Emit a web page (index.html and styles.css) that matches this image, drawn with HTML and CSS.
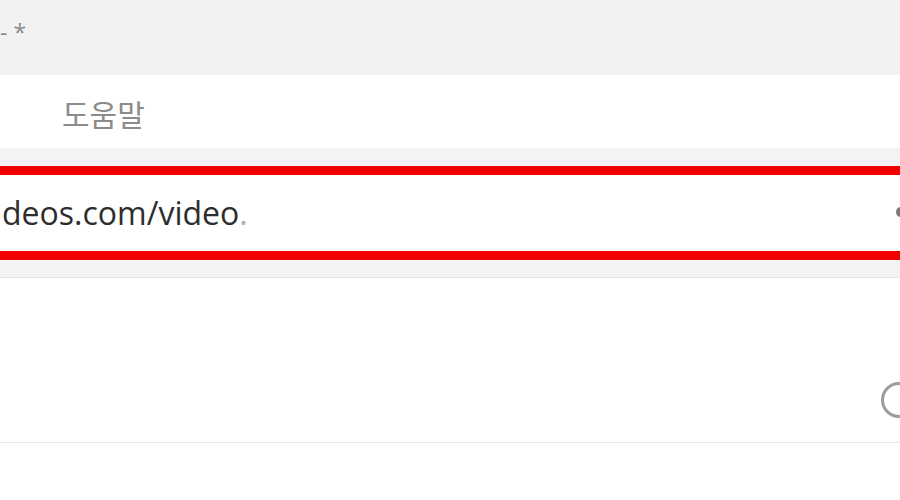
FILE: index.html
```html
<!DOCTYPE html>
<html lang="ko">
<head>
<meta charset="utf-8">
<link rel="stylesheet" href="styles.css">
</head>
<body>
<div class="page">
  <div class="label-band"><span class="label">- *</span></div>
  <div class="help-row"><span class="help">도움말</span></div>
  <div class="gap"></div>
  <div class="field">
    <span class="value">deos.com/video<span class="fade">.</span></span>
    <span class="clear-dot"></span>
  </div>
  <div class="gap gap-bottom"></div>
  <div class="option-row">
    <span class="radio"></span>
  </div>
  <div class="rest"></div>
</div>
</body>
</html>
```
FILE: styles.css
```css
html, body {
  margin: 0;
  padding: 0;
  background: #ffffff;
}
.page {
  width: 900px;
  height: 500px;
  overflow: hidden;
  font-family: "Open Sans", "Noto Sans", "Noto Sans CJK KR", sans-serif;
}
.label-band {
  height: 75px;
  background: #f2f2f2;
  overflow: hidden;
}
.label {
  display: block;
  padding-left: 0;
  line-height: 64px;
  font-size: 23px;
  color: #8a8a8a;
  white-space: nowrap;
}
.help-row {
  height: 73px;
  background: #ffffff;
  display: flex;
  align-items: center;
  padding-left: 62px;
}
.help {
  font-family: "Noto Sans CJK KR", "Noto Sans", sans-serif;
  font-size: 30px;
  color: #8c8c8c;
  line-height: 1;
  margin-top: 2px;
}
.gap {
  height: 18px;
  background: #f3f3f5;
}
.gap-bottom {
  height: 17px;
  border-bottom: 1px solid #e2e2e4;
}
.field {
  height: 76px;
  border-top: 9px solid #f20000;
  border-bottom: 9px solid #f20000;
  background: #ffffff;
  display: flex;
  align-items: center;
  justify-content: space-between;
  overflow: hidden;
}
.value {
  font-size: 32px;
  line-height: 76px;
  color: #2e2e2e;
  padding-left: 2px;
  white-space: nowrap;
}
.fade {
  color: #b0b0b0;
}
.clear-dot {
  width: 9px;
  height: 10px;
  border-radius: 50%;
  background: #7a7a7a;
  margin-right: -5px;
  margin-top: -2px;
}
.option-row {
  height: 165px;
  box-sizing: border-box;
  border-bottom: 1px solid #e6e6e8;
  display: flex;
  justify-content: flex-end;
  padding-top: 104px;
  overflow: hidden;
}
.radio {
  width: 36px;
  height: 36px;
  box-sizing: border-box;
  border: 3px solid #9c9c9c;
  border-radius: 50%;
  margin-right: -17px;
}
.rest {
  height: 60px;
  background: #ffffff;
}
```
